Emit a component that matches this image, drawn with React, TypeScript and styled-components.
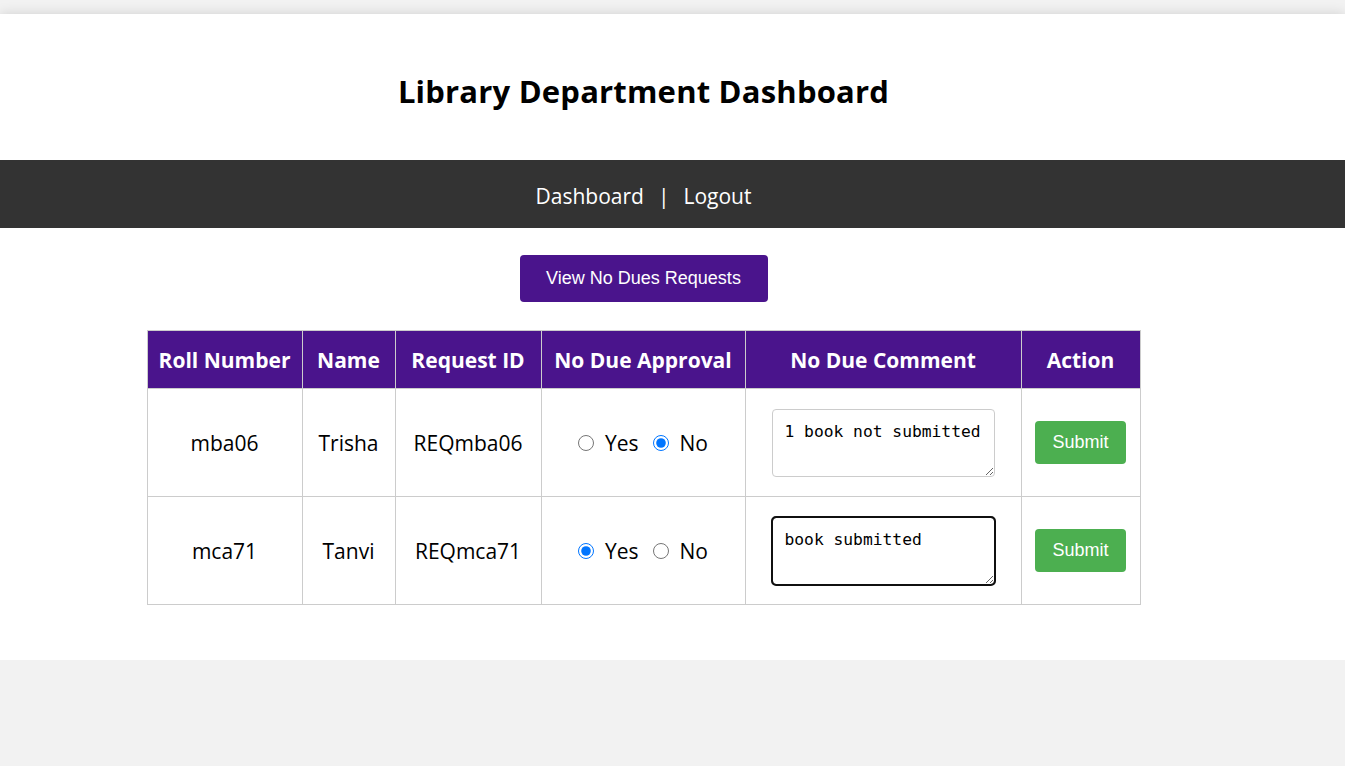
import React, { useState } from "react";
import styled, { createGlobalStyle } from "styled-components";

const Global = createGlobalStyle`
  html, body { margin: 0; padding: 0; }
  body {
    background: #f2f2f2;
    font-family: "Comic Sans MS", "Open Sans", sans-serif;
    color: #000;
  }
`;

const Page = styled.div`
  padding-top: 14px;
`;

const Container = styled.div`
  background: #fff;
  box-shadow: 0 0 12px rgba(0, 0, 0, 0.14);
  padding-bottom: 55px;
`;

const Header = styled.header`
  height: 146px;
  display: flex;
  align-items: center;
  justify-content: center;
  padding-right: 58px;
  box-sizing: border-box;
  padding-top: 8px;
`;

const Title = styled.h1`
  margin: 0;
  font-size: 31px;
  font-weight: 700;
  letter-spacing: 0.2px;
`;

const Nav = styled.nav`
  height: 68px;
  box-sizing: border-box;
  padding-top: 3px;
  background: #333;
  display: flex;
  align-items: center;
  justify-content: center;
  padding-right: 58px;
  font-size: 21px;
  color: #fff;
`;

const NavLink = styled.a`
  color: #fff;
  text-decoration: none;
`;

const Sep = styled.span`
  margin: 0 14px;
`;

const Main = styled.main`
  display: flex;
  flex-direction: column;
  align-items: center;
  padding-right: 58px;
  padding-top: 27px;
`;

const ViewButton = styled.button`
  width: 248px;
  height: 47px;
  background: #4a148c;
  color: #fff;
  border: none;
  border-radius: 4px;
  font-family: "Liberation Sans", Arial, sans-serif;
  font-size: 18px;
  cursor: pointer;
`;

const Table = styled.table`
  margin-top: 28px;
  border-collapse: collapse;
  table-layout: fixed;
`;

const Th = styled.th<{ $w: number }>`
  width: ${(p) => p.$w}px;
  height: 57px;
  background: #4a148c;
  color: #fff;
  font-size: 21px;
  font-weight: 700;
  border: 1px solid #ccc;
  padding: 0;
  white-space: nowrap;
`;

const Td = styled.td`
  height: 107px;
  border: 1px solid #ccc;
  text-align: center;
  vertical-align: middle;
  font-size: 21px;
  padding: 0;
`;

const RadioGroup = styled.div`
  display: flex;
  align-items: center;
  justify-content: center;
  gap: 14px;
`;

const RadioLabel = styled.label`
  display: inline-flex;
  align-items: center;
  gap: 11px;
`;

const Radio = styled.input`
  width: 16px;
  height: 16px;
  margin: 0;
  accent-color: #0075ff;
`;

const Comment = styled.textarea<{ $focused?: boolean }>`
  display: block;
  margin: 0 auto;
  width: 223px;
  height: 68px;
  box-sizing: border-box;
  padding: 12px 12px 8px;
  font-family: "DejaVu Sans Mono", monospace;
  font-size: 16.3px;
  line-height: 20px;
  border: 1px solid #ccc;
  border-radius: 4px;
  resize: both;
  outline: ${(p) => (p.$focused ? "2px solid #101010" : "none")};
  outline-offset: -1px;
  ${(p) => (p.$focused ? "border-color: #101010;" : "")}
`;

const SubmitButton = styled.button`
  width: 91px;
  height: 43px;
  background: #4caf50;
  color: #fff;
  border: none;
  border-radius: 4px;
  font-family: "Liberation Sans", Arial, sans-serif;
  font-size: 18px;
  cursor: pointer;
`;

const cols = [
  { label: "Roll Number", w: 154 },
  { label: "Name", w: 92 },
  { label: "Request ID", w: 145 },
  { label: "No Due Approval", w: 203 },
  { label: "No Due Comment", w: 275 },
  { label: "Action", w: 118 },
];

const initial = [
  { roll: "mba06", name: "Trisha", req: "REQmba06", approval: "No", comment: "1 book not submitted" },
  { roll: "mca71", name: "Tanvi", req: "REQmca71", approval: "Yes", comment: "book submitted" },
];

export default function App() {
  const [rows, setRows] = useState(initial);
  const update = (i: number, key: "approval" | "comment", v: string) =>
    setRows((r) => r.map((row, j) => (j === i ? { ...row, [key]: v } : row)));

  return (
    <Page>
      <Global />
      <Container>
        <Header>
          <Title>Library Department Dashboard</Title>
        </Header>
        <Nav>
          <NavLink href="#">Dashboard</NavLink>
          <Sep>|</Sep>
          <NavLink href="#">Logout</NavLink>
        </Nav>
        <Main>
          <ViewButton>View No Dues Requests</ViewButton>
          <Table>
            <thead>
              <tr>
                {cols.map((c) => (
                  <Th key={c.label} $w={c.w}>
                    {c.label}
                  </Th>
                ))}
              </tr>
            </thead>
            <tbody>
              {rows.map((r, i) => (
                <tr key={r.roll}>
                  <Td>{r.roll}</Td>
                  <Td>{r.name}</Td>
                  <Td>{r.req}</Td>
                  <Td>
                    <RadioGroup>
                      <RadioLabel>
                        <Radio
                          type="radio"
                          name={`ap-${i}`}
                          checked={r.approval === "Yes"}
                          onChange={() => update(i, "approval", "Yes")}
                        />
                        Yes
                      </RadioLabel>
                      <RadioLabel>
                        <Radio
                          type="radio"
                          name={`ap-${i}`}
                          checked={r.approval === "No"}
                          onChange={() => update(i, "approval", "No")}
                        />
                        No
                      </RadioLabel>
                    </RadioGroup>
                  </Td>
                  <Td>
                    <Comment
                      $focused={i === 1}
                      value={r.comment}
                      onChange={(e) => update(i, "comment", e.target.value)}
                    />
                  </Td>
                  <Td>
                    <SubmitButton>Submit</SubmitButton>
                  </Td>
                </tr>
              ))}
            </tbody>
          </Table>
        </Main>
      </Container>
    </Page>
  );
}
